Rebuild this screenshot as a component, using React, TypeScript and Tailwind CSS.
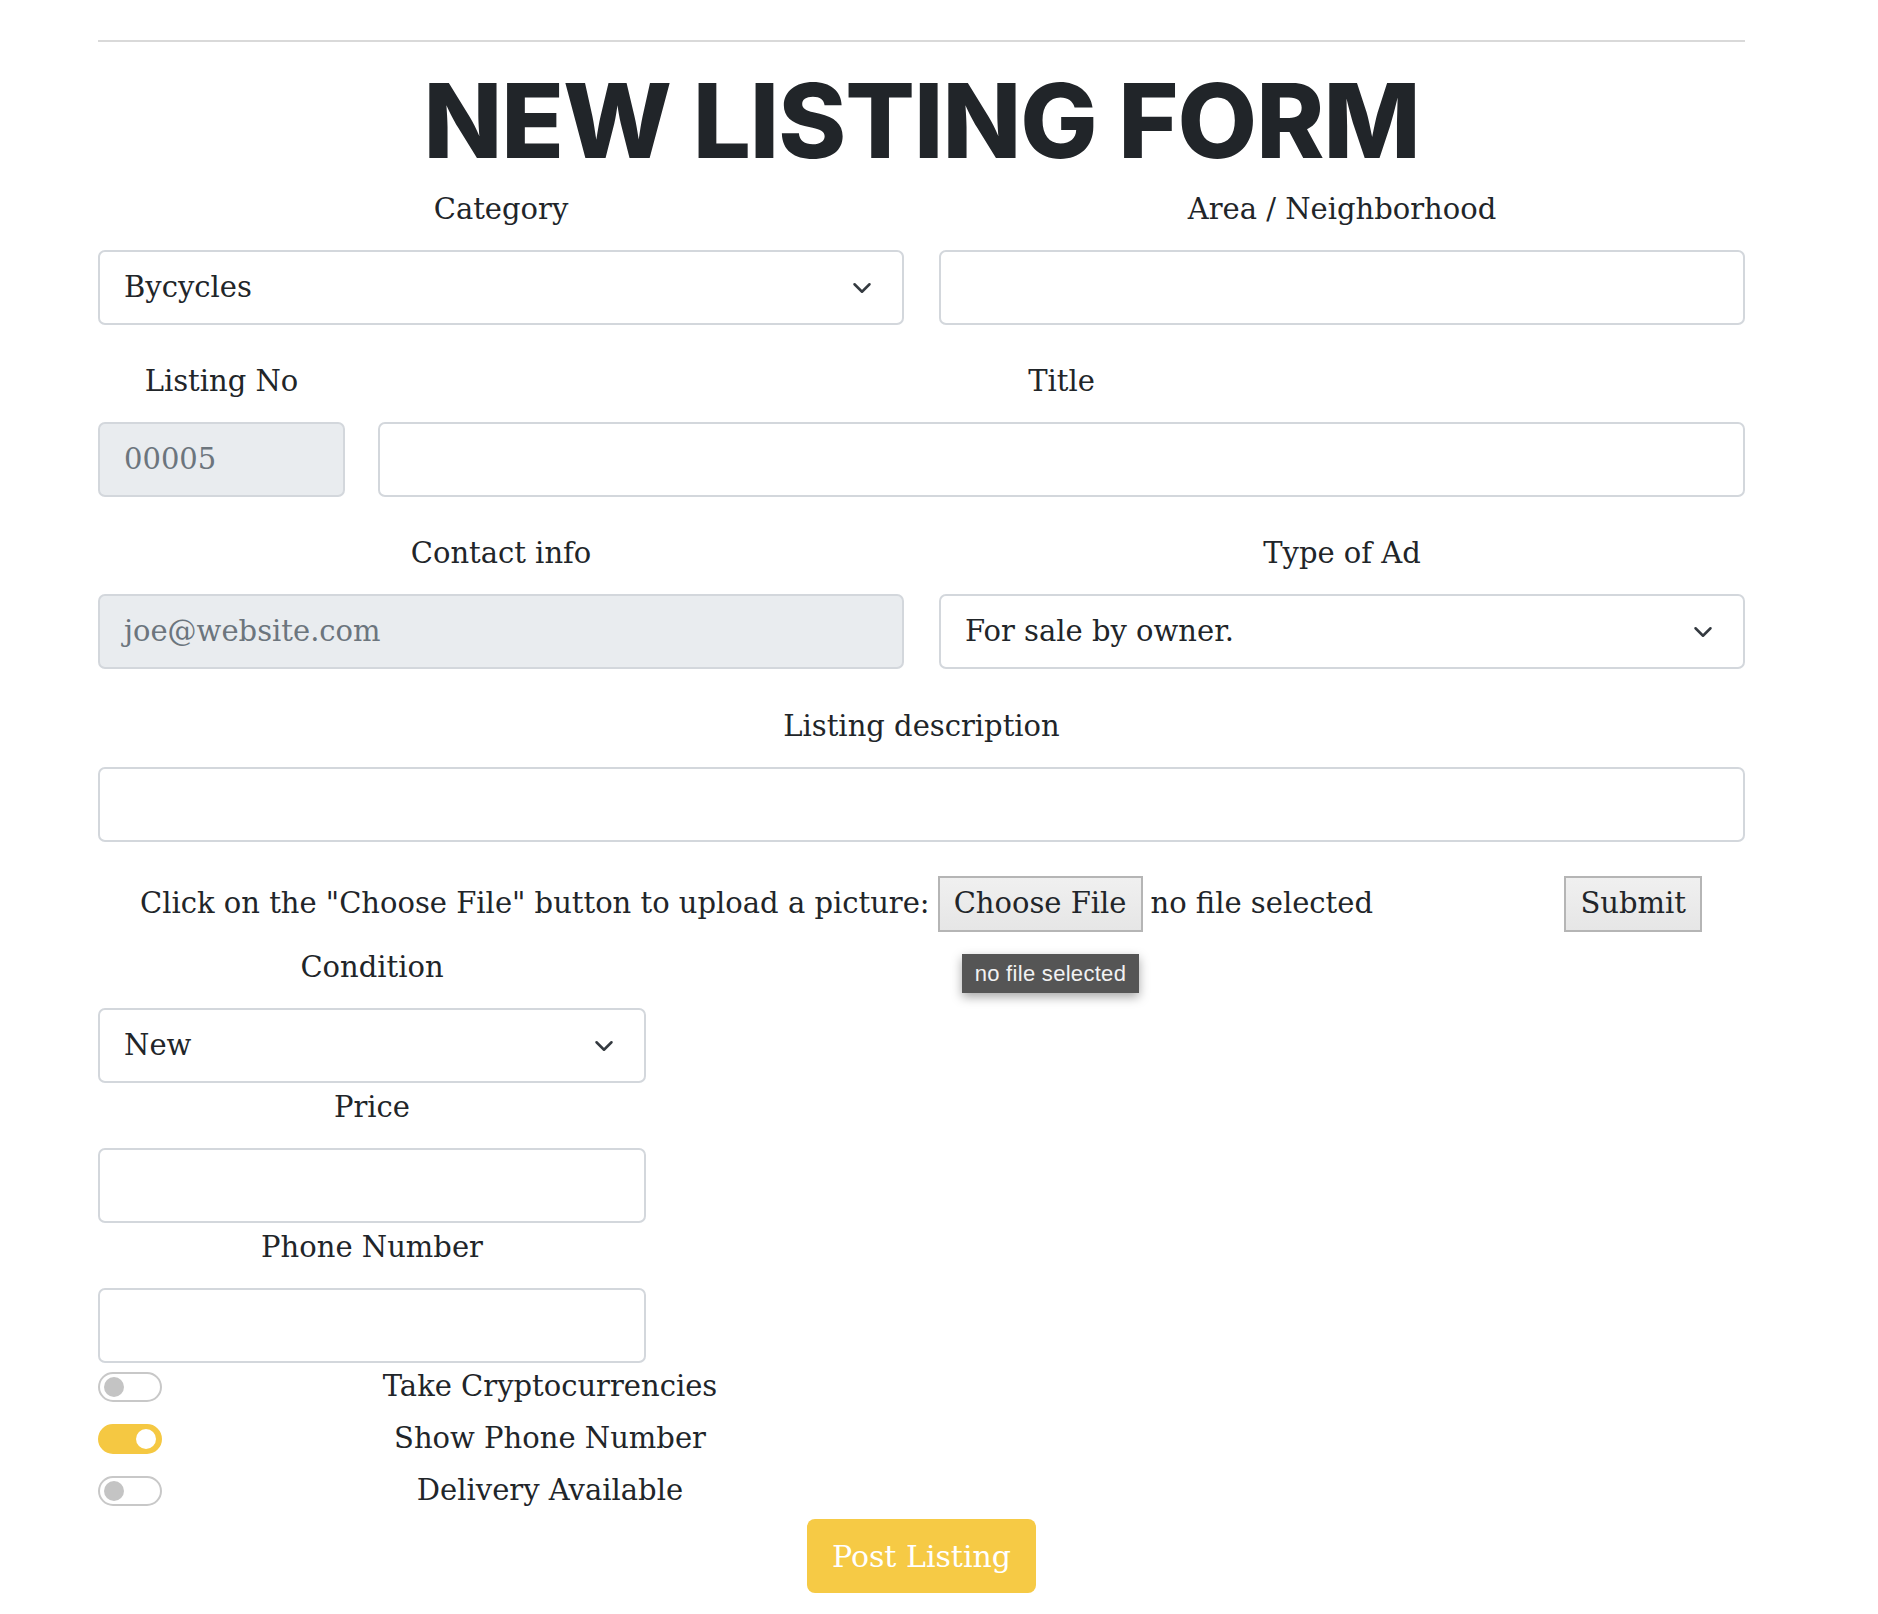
import React from 'react';

const slab = "font-['DejaVu_Serif',serif]";

const Chevron = () => (
  <svg width="20" height="20" viewBox="0 0 16 16" fill="none" className="shrink-0">
    <path d="M2 5l6 6 6-6" stroke="#343a40" strokeWidth="2" strokeLinecap="round" strokeLinejoin="round" />
  </svg>
);

const Label: React.FC<{ text: string }> = ({ text }) => (
  <div className="h-[40px] flex items-center justify-center text-[29px] text-[#212529] mb-[20px]">{text}</div>
);

const Box: React.FC<{ children?: React.ReactNode; disabled?: boolean; className?: string }> = ({
  children,
  disabled,
  className = '',
}) => (
  <div
    className={`h-[75px] rounded-[7px] border-2 border-[#d3d7dc] flex items-center px-[24px] text-[29px] ${
      disabled ? 'bg-[#e9ecef] text-[#6c757d]' : 'bg-white text-[#212529]'
    } ${className}`}
  >
    {children}
  </div>
);

const Select: React.FC<{ value: string }> = ({ value }) => (
  <Box className="justify-between pr-[30px]">
    <span>{value}</span>
    <Chevron />
  </Box>
);

const Toggle: React.FC<{ on?: boolean }> = ({ on }) => (
  <div
    className={`w-[64px] h-[30px] rounded-full border-2 flex items-center px-[4px] ${
      on ? 'bg-[#f5c842] border-[#f5c842] justify-end' : 'bg-white border-[#c8c8c8] justify-start'
    }`}
  >
    <div className={`w-[20px] h-[20px] rounded-full ${on ? 'bg-white' : 'bg-[#c4c4c4]'}`} />
  </div>
);

const ToggleRow: React.FC<{ label: string; on?: boolean }> = ({ label, on }) => (
  <div className="h-[52px] flex items-center">
    <Toggle on={on} />
    <div className="w-[776px] text-center text-[29px] text-[#212529]">{label}</div>
  </div>
);

const fileBtn = 'h-[56px] px-[14px] border-2 border-[#b5b5b5] bg-gradient-to-b from-[#f0f0f0] to-[#e6e6e6]';

export default function App() {
  return (
    <div className={`min-h-[1614px] bg-white ${slab}`}>
      <div className="ml-[98px] w-[1647px] pt-[40px]">
        <div className="h-[2px] bg-[#d9d9d9]" />

        <h1 className="font-['Inter',sans-serif] font-extrabold text-[103px] leading-[120px] text-center text-[#212529] tracking-[-1px] mt-[19px] mb-[9px]">
          NEW LISTING FORM
        </h1>

        {/* category / area */}
        <div className="flex gap-[35px]">
          <div className="flex-1">
            <Label text="Category" />
            <Select value="Bycycles" />
          </div>
          <div className="flex-1">
            <Label text="Area / Neighborhood" />
            <Box />
          </div>
        </div>

        {/* listing no / title */}
        <div className="flex gap-[33px] mt-[37px]">
          <div className="w-[247px]">
            <Label text="Listing No" />
            <Box disabled>00005</Box>
          </div>
          <div className="flex-1">
            <Label text="Title" />
            <Box />
          </div>
        </div>

        {/* contact / type */}
        <div className="flex gap-[35px] mt-[37px]">
          <div className="flex-1">
            <Label text="Contact info" />
            <Box disabled>joe@website.com</Box>
          </div>
          <div className="flex-1">
            <Label text="Type of Ad" />
            <Select value="For sale by owner." />
          </div>
        </div>

        {/* description */}
        <div className="mt-[38px]">
          <Label text="Listing description" />
          <Box />
        </div>

        {/* upload */}
        <div className="flex items-center justify-between pl-[42px] pr-[43px] mt-[34px] h-[56px] text-[29px] text-[#212529]">
          <div className="flex items-center">
            <span>Click on the "Choose File" button to upload a picture:</span>
            <span className="relative ml-[8px]">
              <button className={fileBtn}>Choose File</button>
              <div className="absolute left-[24px] top-[78px] h-[39px] px-[13px] flex items-center whitespace-nowrap bg-[#555555] text-[#f2f2f2] text-[22px] tracking-[0.3px] font-['Liberation_Sans',sans-serif] shadow-[0_4px_10px_rgba(0,0,0,0.35)]">
                no file selected
              </div>
            </span>
            <span className="ml-[8px]">no file selected</span>
          </div>
          <button className={fileBtn}>Submit</button>
        </div>

        {/* condition / price / phone */}
        <div className="w-[548px] mt-[16px]">
          <Label text="Condition" />
          <Select value="New" />
          <div className="mt-[5px]">
            <Label text="Price" />
            <Box />
          </div>
          <div className="mt-[5px]">
            <Label text="Phone Number" />
            <Box />
          </div>
        </div>

        <div className="-mt-[2px]">
          <ToggleRow label="Take Cryptocurrencies" />
          <ToggleRow label="Show Phone Number" on />
          <ToggleRow label="Delivery Available" />
        </div>

        <div className="flex justify-center mt-[2px]">
          <button className="w-[229px] h-[74px] rounded-[8px] bg-[#f6ca45] text-white text-[30px]">
            Post Listing
          </button>
        </div>
      </div>
    </div>
  );
}
